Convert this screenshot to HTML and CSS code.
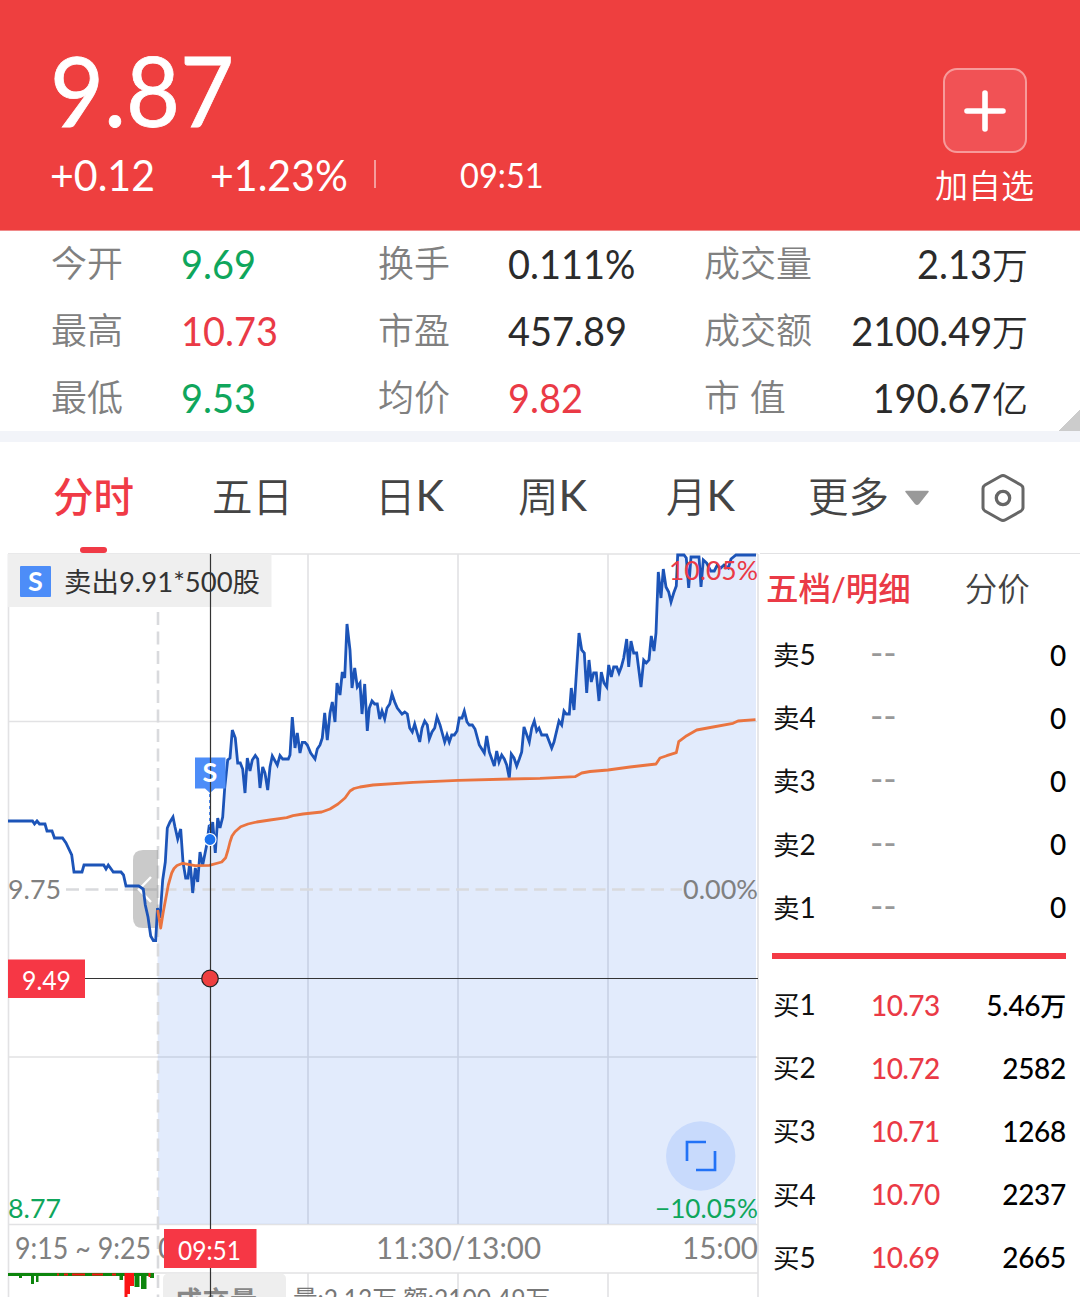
FILE: index.html
```html
<!DOCTYPE html>
<html lang="zh-CN">
<head>
    <meta charset="UTF-8">
    <meta name="viewport" content="width=device-width, initial-scale=1.0">
    <title>分时行情</title>
    <link rel="stylesheet" href="styles.css">
</head>
<body>
    <header class="header">
        <div class="quote">
            <div class="price">9.87</div>
            <div class="changes">
                <span class="change">+0.12</span>
                <span class="percent">+1.23%</span>
                <span class="divider"></span>
                <span class="time">09:51</span>
            </div>
        </div>
        <div class="add">
            <div class="add-button">
                <svg width="42" height="42" viewBox="0 0 42 42">
                    <path d="M21 3V39M3 21H39" stroke="#fff" stroke-width="5.6" stroke-linecap="round"/>
                </svg>
            </div>
            <div class="add-label">加自选</div>
        </div>
    </header>

    <section class="stats">
        <span class="label">今开</span><span class="value down">9.69</span>
        <span class="label">换手</span><span class="value">0.111%</span>
        <span class="label">成交量</span><span class="value right">2.13<i>万</i></span>
        <span class="label">最高</span><span class="value up">10.73</span>
        <span class="label">市盈</span><span class="value">457.89</span>
        <span class="label">成交额</span><span class="value right">2100.49<i>万</i></span>
        <span class="label">最低</span><span class="value down">9.53</span>
        <span class="label">均价</span><span class="value up">9.82</span>
        <span class="label">市 值</span><span class="value right">190.67<i>亿</i></span>
    </section>

    <nav class="tabs">
        <div class="tab active">分时</div>
        <div class="tab">五日</div>
        <div class="tab">日<b>K</b></div>
        <div class="tab">周<b>K</b></div>
        <div class="tab">月<b>K</b></div>
        <div class="tab">更多
            <svg class="caret" width="26" height="16" viewBox="0 0 26 16"><path d="M2 1.5H24L14.5 13.5Q13 15 11.5 13.5Z" fill="#999" stroke="#999" stroke-width="1.5" stroke-linejoin="round"/></svg>
        </div>
        <div class="setting">
            <svg width="46" height="50" viewBox="0 0 46 50" fill="none" stroke="#666">
                <path d="M20.500 3.200Q23 1.800 25.500 3.200L41 12Q43 13.200 43 15.500V34.500Q43 36.800 41 38L25.500 46.800Q23 48.200 20.500 46.800L5 38Q3 36.800 3 34.500V15.500Q3 13.200 5 12Z" stroke-width="3"/>
                <circle cx="23" cy="25" r="6.700" stroke-width="3.300"/>
            </svg>
        </div>
    </nav>

    <main class="main">
        <svg class="chart" width="760" height="744" viewBox="0 553 760 744">
            <!-- 网格 -->
            <g class="grid">
                <path d="M8.500 554V1297M308 554V1224M458 554V1224M608 554V1224M758 554V1297M308 1273V1297M458 1273V1297M608 1273V1297"/>
                <path d="M8 554H758M8 721.500H758M8 1057H758M8 1224.500H758M8 1273H758"/>
            </g>

            <!-- 分时线 -->
            <path id="area" class="area"/>
            <path class="dash" d="M158 612V1297"/>
            <path class="dash" d="M66 889.500H682"/>
            <path class="handle" d="M158 850V928H143Q133 928 133 918V860Q133 850 143 850Z"/>
            <path class="handle-arrow" d="M151 877L139 889.500L151 902"/>
            <polyline id="price" class="price-line"/>
            <polyline class="avg-line" points="157.7,910 160.7,928 163.3,911.7 168.3,885 171.7,873 174,868.5 177,865.5 182.7,863.3 195,865.7 209.3,865.3 221.7,862 225.7,857.7 228,850 230,842 232,836 235,831.7 240.7,826.7 248,824 256.7,822 270,820 286.700,817.700 293,815.700 303,814 321.700,812 330,809 338,804 345,798 350,791 354,788.500 360,787 373,785 413,782.300 458,780.300 510,779 540,778.300 575,776.700 581.700,773 590,771.500 608,770 630,767 656,764 660,758 666.700,755.700 676.300,752.700 678.700,741.700 686.700,735.700 696.700,730 713,727 733,723.300 738,721 755.500,719.700"/>

            <!-- 坐标文字 -->
            <text class="axis red" x="669" y="579.500" textLength="89" lengthAdjust="spacingAndGlyphs">10.05%</text>
            <text class="axis" x="8" y="898.500" textLength="53" lengthAdjust="spacingAndGlyphs">9.75</text>
            <text class="axis" x="683" y="898.500" textLength="75" lengthAdjust="spacingAndGlyphs">0.00%</text>
            <text class="axis green" x="8" y="1218" textLength="53" lengthAdjust="spacingAndGlyphs">8.77</text>
            <text class="axis green" x="655" y="1218" textLength="103" lengthAdjust="spacingAndGlyphs">−10.05%</text>
            <text class="clock" x="15" y="1258.500" textLength="136" lengthAdjust="spacingAndGlyphs">9:15 ~ 9:25</text>
            <text class="clock" x="158" y="1258.500">09:30</text>
            <text class="clock" x="376" y="1258.500" textLength="165" lengthAdjust="spacingAndGlyphs">11:30/13:00</text>
            <text class="clock" x="682" y="1258.500" textLength="76" lengthAdjust="spacingAndGlyphs">15:00</text>

            <!-- 成交提示 -->
            <rect x="8" y="554" width="263.500" height="53" fill="#efefef"/>
            <rect x="20" y="566" width="31" height="31" rx="1" fill="#4d8df8"/>
            <text class="mark" x="35.500" y="591">S</text>
            <text class="trade" x="64" y="592" textLength="196" lengthAdjust="spacingAndGlyphs">卖出9.91*500股</text>

            <!-- 卖出标记 -->
            <path d="M195 757.500H225.500V788.500H215L210 793L205 788.500H195Z" fill="#4d8df8"/>
            <path d="M210 794V834" stroke="#4d8df8" stroke-width="2" stroke-dasharray="3 3"/>

            <!-- 成交量柱 -->
            <path fill="#0d850d" d="M8 1273H154V1276H8ZM19 1276H22V1278H19ZM31 1273H34V1284H31ZM36 1273H38.500V1282H36ZM119.500 1273H123V1280H119.500ZM134.500 1273H139.500V1287H134.500ZM141 1273H146.500V1289H141ZM150 1273H154V1278H150Z"/>
            <path fill="#fb1414" d="M57 1273.500H59V1275.500H57ZM64 1273.500H68V1275.500H64ZM72 1273.500H85V1275.500H72ZM92 1273.500H103V1275.500H92ZM112 1273.500H116V1275.500H112ZM124.500 1273H134V1286H130V1294H127.500V1297H124.500ZM148.500 1273H150.500V1277H148.500Z"/>
            <path d="M163 1297V1279Q163 1273.500 169 1273.500H280Q286 1273.500 286 1279V1297Z" fill="#eee"/>
            <text class="volume-name" x="175" y="1311" textLength="82">成交量</text>
            <text class="volume-text" x="293" y="1309" textLength="257" lengthAdjust="spacingAndGlyphs">量:2.13万 额:2100.49万</text>

            <!-- 十字光标 -->
            <path d="M210.500 554V1297M8 978.500H758" stroke="#333" stroke-width="1.200"/>
            <text class="mark" x="210" y="782">S</text>
            <circle cx="210" cy="839.500" r="6" fill="#1c72ee" stroke="#fff" stroke-width="1.200"/>
            <circle cx="210" cy="978.500" r="8.300" fill="#ee3f3f" stroke="#222" stroke-width="1.200"/>
            <rect x="8" y="959.500" width="77" height="38.500" fill="#f63745"/>
            <text class="tag" x="22" y="990" textLength="49" lengthAdjust="spacingAndGlyphs">9.49</text>
            <rect x="164" y="1229" width="92.500" height="39" fill="#f63745"/>
            <text class="tag" x="178" y="1259.500" textLength="63" lengthAdjust="spacingAndGlyphs">09:51</text>

            <!-- 全屏 -->
            <circle cx="700.700" cy="1156" r="34.700" fill="#c8dafc"/>
            <path d="M687 1161V1142H706M715 1151V1170H696" fill="none" stroke="#2272f6" stroke-width="2.700"/>
        </svg>

        <aside class="book">
            <div class="book-tabs">
                <span class="book-tab active">五档/明细</span>
                <span class="book-tab">分价</span>
            </div>
            <div class="row"><span>卖<b>5</b></span><span class="none">--</span><span class="num">0</span></div>
            <div class="row"><span>卖<b>4</b></span><span class="none">--</span><span class="num">0</span></div>
            <div class="row"><span>卖<b>3</b></span><span class="none">--</span><span class="num">0</span></div>
            <div class="row"><span>卖<b>2</b></span><span class="none">--</span><span class="num">0</span></div>
            <div class="row"><span>卖<b>1</b></span><span class="none">--</span><span class="num">0</span></div>
            <div class="line"></div>
            <div class="row"><span>买<b>1</b></span><span class="bid">10.73</span><span class="num">5.46<i>万</i></span></div>
            <div class="row"><span>买<b>2</b></span><span class="bid">10.72</span><span class="num">2582</span></div>
            <div class="row"><span>买<b>3</b></span><span class="bid">10.71</span><span class="num">1268</span></div>
            <div class="row"><span>买<b>4</b></span><span class="bid">10.70</span><span class="num">2237</span></div>
            <div class="row"><span>买<b>5</b></span><span class="bid">10.69</span><span class="num">2665</span></div>
        </aside>
    </main>

    <script src="chart.js"></script>
</body>
</html>
```
FILE: styles.css
```css
body {
    margin: 0;
    width: 1080px;
    height: 1297px;
    overflow: hidden;
    background-color: #fff;
    font-family: Lato, "Noto Sans CJK SC", sans-serif;
    font-kerning: none;
    color: #2b2b2b;
}
i, b {
    font-style: normal;
    font-weight: inherit;
}

/* 顶部价格 */
.header {
    display: flex;
    justify-content: space-between;
    height: 231px;
    padding: 0 46px 0 50px;
    border-bottom: 1px solid #f08a8a;
    box-sizing: border-box;
    background-color: #ee3f3f;
    color: #fff;
}
.quote {
    padding-top: 44px;
}
.price {
    height: 92px;
    margin-bottom: 11px;
    line-height: 92px;
    font-size: 97px;
    -webkit-text-stroke: 0.8px #fff;
    transform: scaleX(0.96);
    transform-origin: left;
}
.changes {
    display: flex;
    align-items: center;
    height: 54px;
    font-size: 43px;
}
.change,
.percent {
    transform: scaleX(0.955);
    transform-origin: left;
}
.change {
    width: 160px;
}
.percent {
    width: 164px;
}
.divider {
    width: 2px;
    height: 28px;
    margin-right: 84px;
    background-color: #f59c9c;
}
.time {
    font-size: 35px;
    transform: scaleX(0.93);
    transform-origin: left;
}
.add {
    display: flex;
    flex-direction: column;
    align-items: center;
    padding-top: 68px;
}
.add-button {
    display: flex;
    align-items: center;
    justify-content: center;
    width: 84px;
    height: 85px;
    border: 2px solid #f79a9a;
    border-radius: 14px;
    box-sizing: border-box;
    background-color: #f15255;
}
.add-label {
    margin-top: 8px;
    line-height: 48px;
    font-size: 33px;
    font-weight: 350;
}

/* 指标 */
.stats {
    display: grid;
    grid-template-columns: 130px 197px 130px 196px 130px 194px;
    grid-auto-rows: 67px;
    align-items: center;
    height: 200px;
    padding-left: 51px;
    border-bottom: 11px solid #f2f4f9;
    background: linear-gradient(135deg, transparent 50%, #ccc 50%) right bottom / 22px 22px no-repeat;
    background-clip: padding-box;
    background-origin: padding-box;
}
.label {
    padding-bottom: 7px;
    font-size: 36px;
    font-weight: 350;
    color: #808080;
    white-space: nowrap;
}
.value {
    padding-bottom: 3px;
    font-size: 41px;
    white-space: nowrap;
    transform: scaleX(0.925);
    transform-origin: left;
}
.value i {
    display: inline-block;
    margin-left: 3px;
    font-size: 36px;
    line-height: 40px;
    font-weight: 350;
    transform: scaleX(1.08);
    transform-origin: right;
}
.right {
    justify-self: end;
    transform-origin: right;
}
.up {
    color: #ea3a46;
}
.down {
    color: #0fa65c;
}

/* 周期切换 */
.tabs {
    display: grid;
    grid-template-columns: 159px 163px 143px 148px 142px 172px 46px;
    align-items: center;
    height: 111px;
    padding-left: 53px;
    font-size: 40.5px;
    color: #444;
}
.tab {
    display: flex;
    align-items: center;
    height: 111px;
    padding-bottom: 6px;
    box-sizing: border-box;
    font-weight: 350;
    white-space: nowrap;
}
.tab b {
    font-size: 43px;
    font-weight: 400;
}
.tab.active {
    position: relative;
    font-weight: 500;
    color: #f03a46;
}
.tab.active::after {
    content: "";
    position: absolute;
    left: 27px;
    bottom: 0;
    width: 27px;
    height: 6px;
    border-radius: 3px;
    background-color: #f03a46;
}
.caret {
    margin: 6px 0 0 15px;
}
.setting {
    height: 50px;
}

/* 分时图 */
.main {
    display: flex;
    height: 744px;
}
.chart {
    display: block;
    flex: none;
}
.grid path {
    fill: none;
    stroke: #e2e2e4;
    stroke-width: 1.6;
}
.area {
    fill: rgba(40, 105, 235, 0.135);
}
.dash {
    fill: none;
    stroke: #d9dadd;
    stroke-width: 2.6;
    stroke-dasharray: 13 6.5;
}
.handle {
    fill: rgba(150, 150, 150, 0.5);
}
.handle-arrow {
    fill: none;
    stroke: #fff;
    stroke-width: 2.4;
}
.price-line {
    fill: none;
    stroke: #1c54b8;
    stroke-width: 2.8;
}
.avg-line {
    fill: none;
    stroke: #ea7440;
    stroke-width: 2.8;
    stroke-linejoin: round;
}
.axis {
    font-size: 27.5px;
    fill: #808080;
}
.axis.red {
    fill: #ea3a46;
}
.axis.green {
    fill: #0fa65c;
}
.clock {
    font-size: 30px;
    fill: #808080;
}
.trade {
    font-size: 27px;
    fill: #333;
}
.mark {
    font-size: 27px;
    font-weight: 700;
    text-anchor: middle;
    fill: #fff;
}
.tag {
    font-size: 26.5px;
    fill: #fff;
}
.volume-name {
    font-size: 27px;
    font-weight: 700;
    fill: #888;
}
.volume-text {
    font-size: 26px;
    fill: #777;
}

/* 五档 */
.book {
    flex: 1;
    border-top: 1px solid #e2e2e4;
    color: #111;
}
.book-tabs {
    display: flex;
    gap: 54px;
    height: 69px;
    padding-left: 6px;
    line-height: 69px;
    font-size: 32.5px;
    font-weight: 350;
    color: #444;
}
.book-tab.active {
    font-weight: 500;
    color: #ea3a46;
}
.row {
    display: grid;
    grid-template-columns: 98px 90px 1fr;
    align-items: center;
    height: 63.2px;
    padding: 0 14px 2px 13px;
    box-sizing: border-box;
    font-size: 26.5px;
}
.row b,
.bid,
.num {
    font-size: 28px;
}
.bid,
.num {
    padding-top: 2px;
}
.num {
    justify-self: end;
    font-weight: 500;
    letter-spacing: -0.3px;
    color: #000;
}
.num i {
    font-size: 26px;
}
.bid {
    font-weight: 500;
    letter-spacing: -0.6px;
    color: #ea3a46;
}
.none {
    margin-left: -1px;
    font-size: 36px;
    line-height: 36px;
    padding-bottom: 3px;
    color: #999;
}
.line {
    height: 6px;
    margin: 14px 14px 14px 12px;
    background-color: #f33a45;
}
```
FILE: chart.js
```js
const before = '8,821 32.5,821 34.5,824 37,821 39.5,824 45,824 47,831 52,831 54.5,838 62.5,838 66,843 71.7,855 74,872 82,872 84,865 103.7,865 106,869 108.3,865 113.3,872 121,872 123.5,875 126,886 138.7,886 143.3,889 145.3,905 148,917 150.7,936 153.3,940.5 155.7,940.5 157.5,908';

const trading = [
    '157.5,908 160,918 162.7,880 165.3,862 167.3,828 170,822 173,817 175,827 177.7,839 180.7,829 183,862 185.7,878 188,878 190,860 192.7,893 195.3,868 197.7,882 200,852 202.7,865 206.7,845 209.3,825 211,838 212.7,822 215.3,853 217.7,818 220,828 222.7,817 224.7,788 227.7,760 230,758',
    '232.3,730 235.3,738 237.7,763 240.3,763 242.7,769 245,793 247.3,758 250,771 252.3,760 255.3,755.5 257.7,759 260,788 262.7,767 265,773 267.7,790 270,767 272.3,756 277.3,765 280,755.5 282.7,759 288.3,759 290,755',
    '292.3,717 295,748 297.3,733 300,753 302.3,742.3 305,742.3 307.3,745 310.7,753 315,759 317.3,749 320,745 322.3,738 324.7,713 327.3,740 330,713 332.3,702 335,722 337,683 340,695 342.3,672 344.7,678 347,624 350,650 352,688 354.7,668 357.3,687 360,683 362,714 364.7,684 367.3,731 369.3,708 372,701 374.7,704 377.3,704 379.7,719 382,711 384.7,719 387,708 389.7,704 392,694 394.7,702 397.3,708 402,714 404.7,712 407.3,714 409.7,728 412.3,732 414.7,724 419.7,742 422,728 424.7,721 427.3,725 429.3,739 432,732 434.7,728 437,717 440,725 444.7,742 447,735 449.3,742 451.7,735 454.3,735 457,731 459.3,718 462,718 464.3,711',
    '467,722 469.3,725 472.3,725 475,729 479.3,745 484.3,753 486.7,736 489.3,752 494.3,766 496.7,751 499,762 501.7,755 504.3,759 506.7,765 509.3,778 511.3,754 514,758 516.7,766 519.3,759 521.7,752 524,727 529.3,742 531.7,728 534.3,721 536.7,731 539,728 541.7,735 546.7,735 551.7,748 554,742 559,721 561.7,725 564,711 566.3,714 569.3,714 571.3,688 574,710 579,633 581.7,650 584.3,653 586.7,693 589,660 591.3,682 593.7,673 596.3,673 599,701 601.3,672 604,683 606.7,687 608.7,665 611.3,677 613.7,667 616.7,667 619,673 621.3,667 623.7,658 626.7,639 628.7,667 631,641 633.7,653 636.7,653 641,687 643.7,660 646.3,663 649,660 651.3,636 654,651 656,633',
    '658.3,572 661,598 663.3,569 666,587 668.7,592 671,602 673.7,593 676.3,586 677.7,555 684,555 686.3,558 688.7,588 691,557 699,557 701,587 703.3,560 706.7,563 710.7,571 714.3,571 717.3,565 720.7,568 724,565 728.3,568 731,559 736,555 756,555'
].join(' ');

document.getElementById('price').setAttribute('points', before + ' ' + trading);
document.getElementById('area').setAttribute('d', 'M158 1224L' + trading + ' 756 1224Z');
```
